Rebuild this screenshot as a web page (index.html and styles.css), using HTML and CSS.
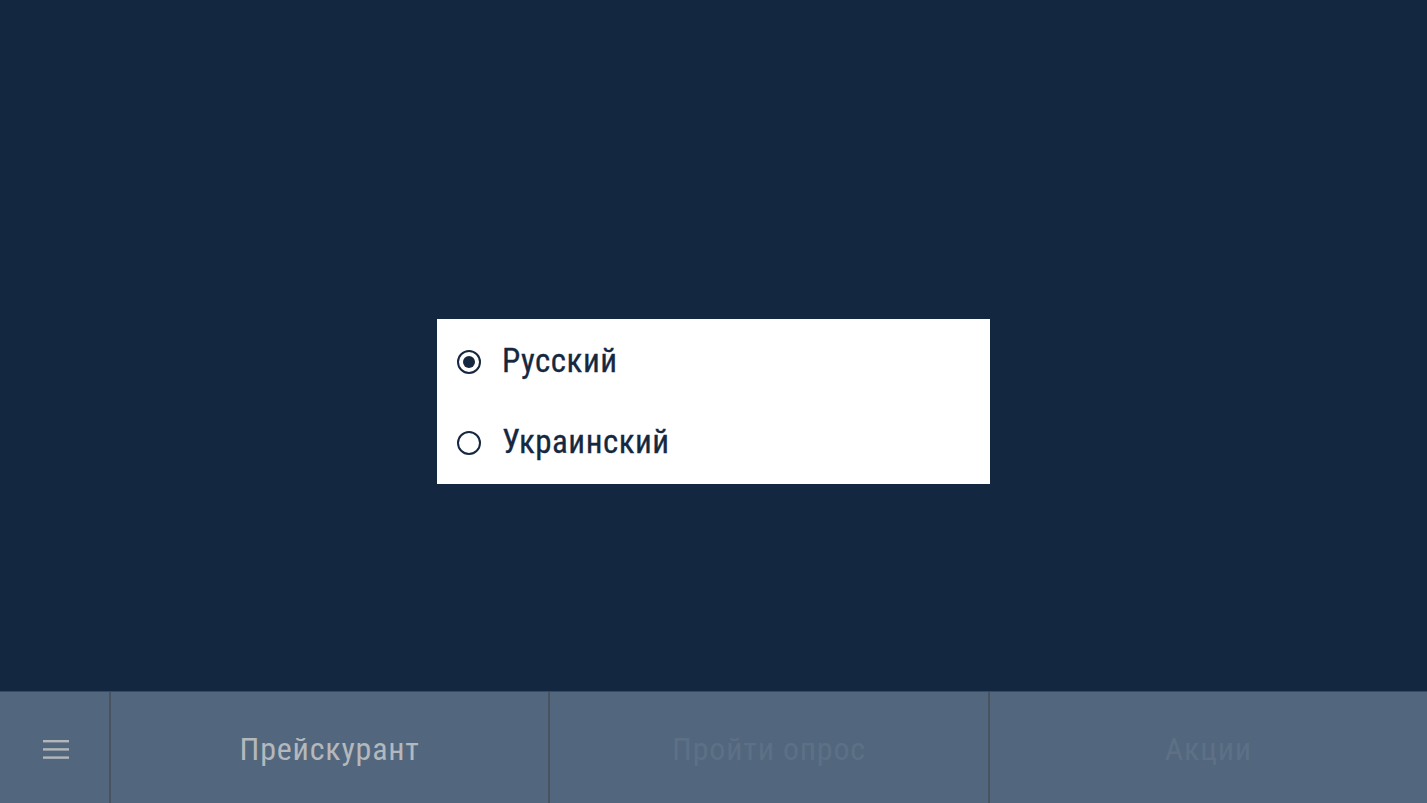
FILE: index.html
```html
<!DOCTYPE html>
<html lang="ru">
<head>
<meta charset="utf-8">
<title>Язык</title>
<link rel="stylesheet" href="styles.css">
</head>
<body>
<div class="screen">
  <main class="content"></main>
  <nav class="bottombar">
    <div class="cell menu">
      <svg class="burger" width="28" height="20" viewBox="0 0 28 20">
        <rect x="1" y="1" width="26" height="2.4" fill="#b3b7bb"/>
        <rect x="1" y="9.2" width="26" height="2.4" fill="#b3b7bb"/>
        <rect x="1" y="17.4" width="26" height="2.4" fill="#b3b7bb"/>
      </svg>
    </div>
    <div class="cell tab active">Прейскурант</div>
    <div class="cell tab disabled">Пройти опрос</div>
    <div class="cell tab disabled">Акции</div>
  </nav>
</div>
<div class="dialog">
  <div class="option">
    <span class="radio checked"></span>
    <span class="label">Русский</span>
  </div>
  <div class="option">
    <span class="radio"></span>
    <span class="label">Украинский</span>
  </div>
</div>
</body>
</html>
```

FILE: styles.css
```css
html, body {
  margin: 0;
  padding: 0;
  height: 100%;
}
body {
  background: #132840;
  font-family: "Roboto Condensed", Roboto, "Liberation Sans", sans-serif;
  font-stretch: condensed;
  overflow: hidden;
}
.screen {
  display: flex;
  flex-direction: column;
  height: 803px;
}
.content {
  flex: 1;
}
.bottombar {
  height: 111px;
  border-top: 1px solid #3a4b5e;
  background: #52677d;
  display: grid;
  grid-template-columns: 109px 1fr 1fr 1fr;
}
.cell {
  display: flex;
  align-items: center;
  justify-content: center;
  border-left: 2px solid #48535f;
  font-size: 32px;
  letter-spacing: 0.8px;
  padding-top: 2px;
}
.cell.menu {
  border-left: none;
}
.burger {
  display: block;
  margin-left: 2px;
}
.tab.active {
  color: #b4b8bc;
}
.tab.disabled {
  color: #5e7086;
}
.dialog {
  position: absolute;
  left: 437px;
  top: 319px;
  width: 553px;
  height: 165px;
  box-sizing: border-box;
  padding: 2px 0 1px;
  background: #ffffff;
  display: flex;
  flex-direction: column;
}
.option {
  height: 81px;
  display: flex;
  align-items: center;
  padding-left: 20px;
  gap: 21px;
}
.radio {
  width: 24px;
  height: 24px;
  box-sizing: border-box;
  border: 2px solid #15283f;
  border-radius: 50%;
  display: flex;
  align-items: center;
  justify-content: center;
  flex: none;
}
.radio.checked::after {
  content: "";
  width: 12px;
  height: 12px;
  border-radius: 50%;
  background: #15283f;
}
.label {
  font-size: 33px;
  font-weight: 400;
  color: #15283f;
  letter-spacing: 0.5px;
  padding-bottom: 3px;
  -webkit-text-stroke: 0.3px #15283f;
}
```
